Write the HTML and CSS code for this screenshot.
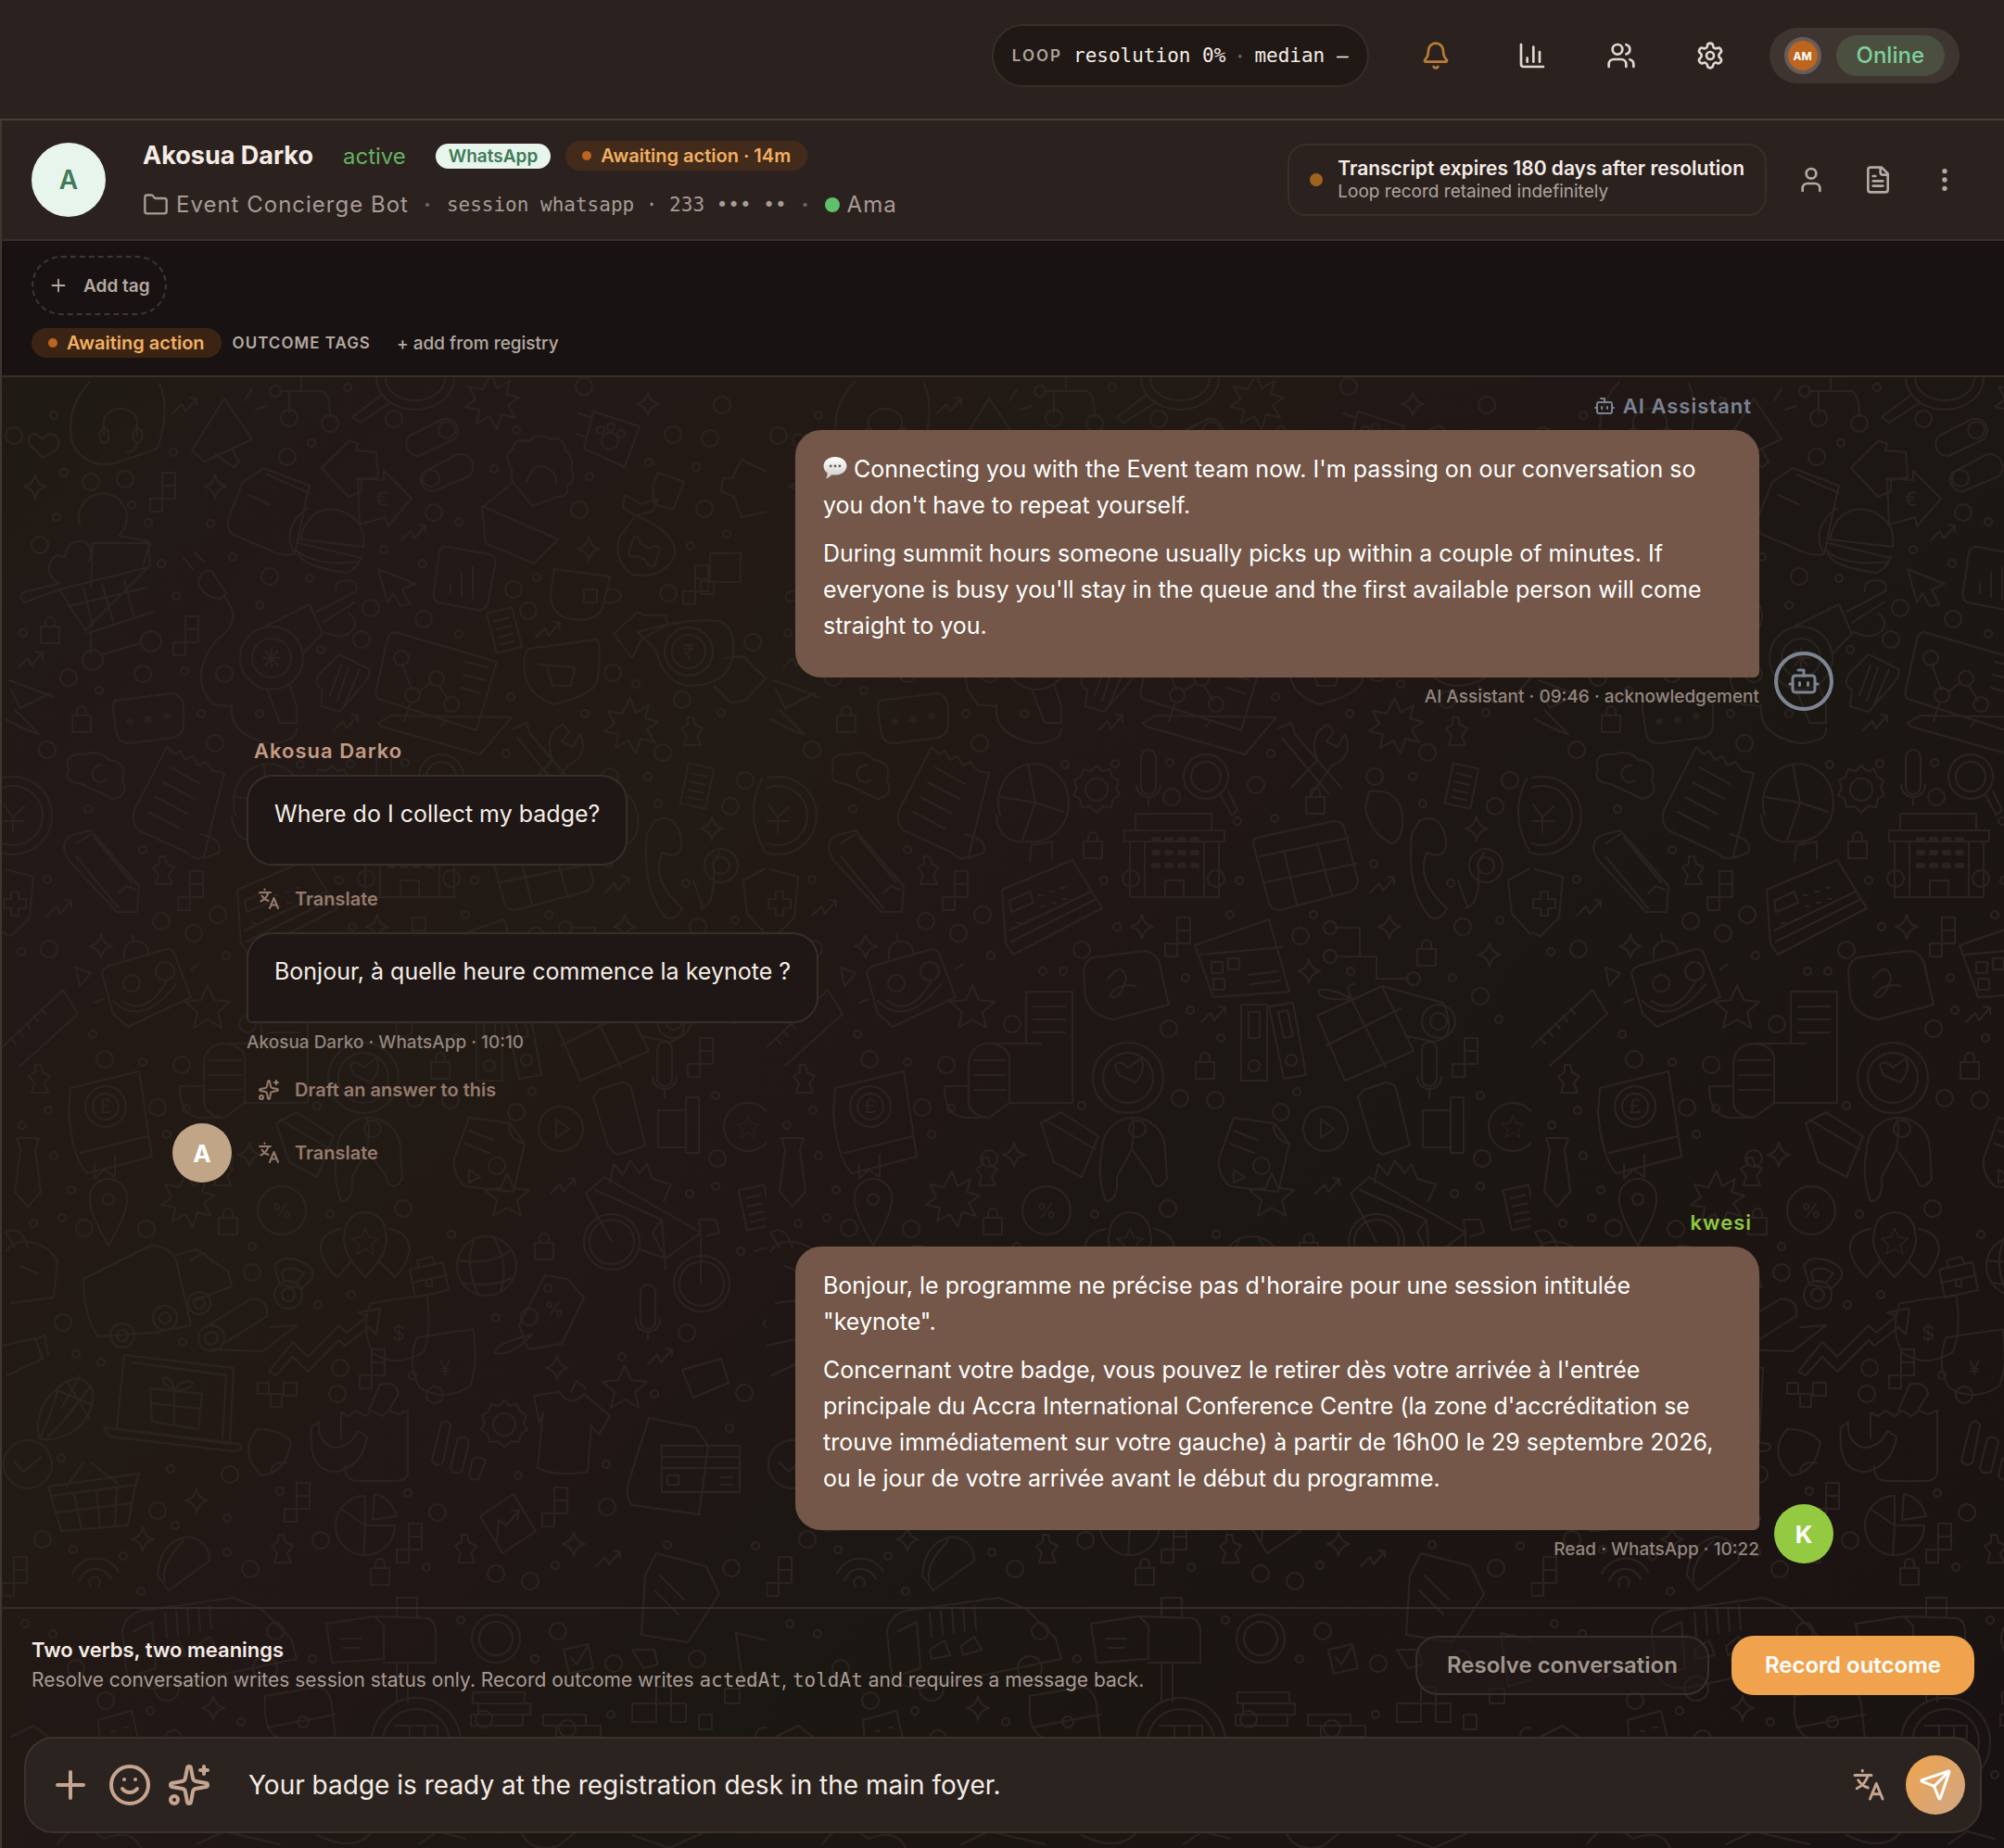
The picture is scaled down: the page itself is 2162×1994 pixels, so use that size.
FILE: index.html
```html
<!DOCTYPE html>
<html lang="en">
<head>
    <meta charset="UTF-8">
    <meta name="viewport" content="width=device-width, initial-scale=1.0">
    <title>Akosua Darko - Event Concierge Bot</title>
    <link rel="stylesheet" href="styles.css">
</head>
<body>
    <!-- Shared icons -->
    <svg class="sprite" aria-hidden="true">
        <symbol id="i-translate" viewBox="0 0 24 24"><path d="M2 5h12M7.500 1.500v.5M11.500 5c-1 4-4 7.500-8 9.500M4.500 8.500c1.500 2.500 4 4.500 7 5.500M13 22l4.500-11L22 22M14.500 18.500h6"/></symbol>
        <symbol id="i-spark" viewBox="0 0 24 24"><path d="M11.017 2.814a1 1 0 0 1 1.966 0l1.051 5.558a2 2 0 0 0 1.594 1.594l5.558 1.051a1 1 0 0 1 0 1.966l-5.558 1.051a2 2 0 0 0-1.594 1.594l-1.051 5.558a1 1 0 0 1-1.966 0l-1.051-5.558a2 2 0 0 0-1.594-1.594l-5.558-1.051a1 1 0 0 1 0-1.966l5.558-1.051a2 2 0 0 0 1.594-1.594zM20 2v4M22 4h-4"/><circle cx="4" cy="20" r="2"/></symbol>
        <symbol id="i-bot" viewBox="0 0 24 24"><path d="M12 8V4H8"/><rect width="16" height="12" x="4" y="8" rx="2"/><path d="M2 14h2M20 14h2M15 13v2M9 13v2"/></symbol>
        <symbol id="i-plus" viewBox="0 0 24 24"><path d="M5 12h14M12 5v14"/></symbol>
    </svg>

    <header class="topbar">
        <div class="loop">
            <span class="loop-label">LOOP</span>
            <span class="mono">resolution 0%</span>
            <span class="sep">·</span>
            <span class="mono">median —</span>
        </div>
        <button class="icon-btn bell" aria-label="Notifications">
            <svg class="icon" viewBox="0 0 24 24"><path d="M10.268 21a2 2 0 0 0 3.464 0M3.262 15.326A1 1 0 0 0 4 17h16a1 1 0 0 0 .74-1.673C19.410 13.956 18 12.499 18 8A6 6 0 0 0 6 8c0 4.499-1.411 5.956-2.738 7.326"/></svg>
        </button>
        <button class="icon-btn" aria-label="Reports">
            <svg class="icon" viewBox="0 0 24 24"><path d="M3 3v16a2 2 0 0 0 2 2h16M18 17V9M13 17V5M8 17v-3"/></svg>
        </button>
        <button class="icon-btn" aria-label="Team">
            <svg class="icon" viewBox="0 0 24 24"><path d="M16 21v-2a4 4 0 0 0-4-4H6a4 4 0 0 0-4 4v2M22 21v-2a4 4 0 0 0-3-3.870M16 3.130a4 4 0 0 1 0 7.750"/><circle cx="9" cy="7" r="4"/></svg>
        </button>
        <button class="icon-btn" aria-label="Settings">
            <svg class="icon" viewBox="0 0 24 24"><path d="M9.671 4.136a2.340 2.340 0 0 1 4.659 0 2.340 2.340 0 0 0 3.319 1.915 2.340 2.340 0 0 1 2.330 4.033 2.340 2.340 0 0 0 0 3.831 2.340 2.340 0 0 1-2.330 4.033 2.340 2.340 0 0 0-3.319 1.915 2.340 2.340 0 0 1-4.659 0 2.340 2.340 0 0 0-3.320-1.915 2.340 2.340 0 0 1-2.330-4.033 2.340 2.340 0 0 0 0-3.831A2.340 2.340 0 0 1 6.350 6.051a2.340 2.340 0 0 0 3.319-1.915"/><circle cx="12" cy="12" r="3"/></svg>
        </button>
        <button class="presence">
            <span class="me">AM</span>
            <span class="online">Online</span>
        </button>
    </header>

    <main class="conversation">
        <section class="conv-head">
            <div class="contact-avatar">A</div>
            <div class="contact">
                <div class="contact-row">
                    <h1>Akosua Darko</h1>
                    <span class="state">active</span>
                    <span class="channel">WhatsApp</span>
                    <span class="pill"><i class="dot"></i>Awaiting action · 14m</span>
                </div>
                <div class="contact-sub">
                    <svg class="icon folder" viewBox="0 0 24 24"><path d="M20 20a2 2 0 0 0 2-2V8a2 2 0 0 0-2-2h-7.900a2 2 0 0 1-1.690-.9L9.600 3.900A2 2 0 0 0 7.930 3H4a2 2 0 0 0-2 2v13a2 2 0 0 0 2 2Z"/></svg>
                    <span>Event Concierge Bot</span>
                    <span class="sep">·</span>
                    <span class="mono session">session whatsapp · 233 ••• ••</span>
                    <span class="sep">·</span>
                    <span class="agent"><i class="online-dot"></i>Ama</span>
                </div>
            </div>
            <div class="retention">
                <i class="dot"></i>
                <div>
                    <strong>Transcript expires 180 days after resolution</strong>
                    <p>Loop record retained indefinitely</p>
                </div>
            </div>
            <div class="conv-actions">
                <button class="icon-btn" aria-label="Contact">
                    <svg class="icon" viewBox="0 0 24 24"><circle cx="12" cy="7" r="4"/><path d="M19 21v-2a4 4 0 0 0-4-4H9a4 4 0 0 0-4 4v2"/></svg>
                </button>
                <button class="icon-btn" aria-label="Notes">
                    <svg class="icon" viewBox="0 0 24 24"><path d="M15 2H6a2 2 0 0 0-2 2v16a2 2 0 0 0 2 2h12a2 2 0 0 0 2-2V7ZM14 2v4a2 2 0 0 0 2 2h4M10 9H8M16 13H8M16 17H8"/></svg>
                </button>
                <button class="icon-btn" aria-label="More">
                    <svg class="icon solid" viewBox="0 0 24 24"><circle cx="12" cy="5" r="2"/><circle cx="12" cy="12" r="2"/><circle cx="12" cy="19" r="2"/></svg>
                </button>
            </div>
        </section>

        <section class="tags">
            <button class="add-tag"><svg class="icon" viewBox="0 0 24 24"><use href="#i-plus"/></svg>Add tag</button>
            <div class="tag-row">
                <span class="pill"><i class="dot"></i>Awaiting action</span>
                <span class="tag-label">OUTCOME TAGS</span>
                <button class="link-btn">+ add from registry</button>
            </div>
        </section>

        <div class="stage">
            <!-- Doodle wallpaper, one 825px wide tile repeated across the chat -->
            <svg class="wallpaper" aria-hidden="true">
                <defs>
                    <marker id="ring" markerUnits="userSpaceOnUse" markerWidth="24" markerHeight="24" refX="12" refY="12"><circle class="ring" cx="12" cy="12" r="9"/></marker>
                    <marker id="bead" markerUnits="userSpaceOnUse" markerWidth="12" markerHeight="12" refX="6" refY="6"><circle class="ring" cx="6" cy="6" r="4"/></marker>
                    <path id="d-spark" d="M0-13Q2-2 12 0Q2 2 0 13Q-2 2-12 0Q-2-2 0-13Z"/>
                    <path id="d-zig" d="M-14 8L-4-2L0 6L12-8M5-9L12-8L12-1"/>
                    <path id="d-lock" d="M-10-4H10V14H-10ZM-5-4V-9A5 5 0 0 1 5-9V-4"/>
                    <path id="d-steps" d="M-7-20H7V-6H-7ZM-7-6H7V8H-7ZM-7 8H-20V22H-7Z"/>
                    <path id="d-star" d="M0-24L7-8L24-6L11 5L15 22L0 13L-15 22L-11 5L-24-6L-7-8Z"/>
                    <path id="d-burst" d="M0-30L6-14L20-22L16-8L30-4L18 4L26 18L11 14L6 30L-2 16L-16 24L-13 9L-28 6L-17-2L-24-16L-9-13Z"/>
                    <path id="d-knight" d="M-8 14H10L6 4L12-4L4-8L2-16L-4-16L-4-8L-11-4L-5 4Z"/>
                    <path id="d-note" d="M-14-22H14V22H-14ZM-8-12H8M-8-3H8M-8 6H8M-8 14H8"/>
                    <path id="d-clip" d="M-8-18A8 8 0 0 1 8-18V14A8 8 0 0 1-8 14Z M-13 12A13 13 0 0 0 13 12M0 25V34"/>
                    <path id="d-bubble" d="M-34-34Q0-40 34-44Q40 0 30 24Q0 44-30 26Q-46 0-34-34Z"/>
                    <path id="d-pin" d="M0 42Q-22 4-20-10A20 20 0 0 1 20-10Q22 4 0 42ZM6-8A6 6 0 1 0-6-8A6 6 0 1 0 6-8"/>
                    <path id="d-gear" d="M0-26L6-20L14-22L17-14L24-10L21-2L25 6L18 10L16 19L7 18L0 25L-7 18L-16 19L-18 10L-25 6L-21-2L-24-10L-17-14L-14-22L-6-20ZM12 0A12 12 0 1 0-12 0A12 12 0 1 0 12 0"/>
                    <pattern id="doodles" width="825" height="1600" patternUnits="userSpaceOnUse">
                        <g transform="translate(0 -407)">
                            <polyline class="spots" marker-start="url(#ring)" marker-mid="url(#ring)" marker-end="url(#ring)" points="308,493 133,517 96,520 466,553 623,550 758,549 289,622 552,636 398,656 455,668 568,659 719,640 388,690 41,588 72,731 152,727 240,727 659,726 734,755 230,802 49,809 713,812 172,994 233,987 207,1007 51,1024 111,1143 194,1149 786,870 802,842 628,417 423,452 724,469 764,473 777,437 13,470 810,693 437,860 528,847 656,838 576,1010 751,1000 340,1025 265,1105 434,1110 770,1075 400,1218 446,1185 555,1200 484,1187 168,1195 240,1250 772,1250 433,1304 89,1325 156,1326 270,1373 66,1427 365,1476 569,1421 739,1438 362,1504 467,1505 801,1503 246,1591 168,1630 470,1632 653,1626 44,1661 344,1662 268,1693 533,1698 570,1706 787,1692 80,1800 112,1835 185,1876 600,1760 660,1795 520,1855 822,1873 295,1760 750,1790 610,1865 380,1905 140,1930 700,1930"/>
                            <polyline class="spots" marker-start="url(#bead)" marker-mid="url(#bead)" marker-end="url(#bead)" points="56,448 373,418 334,478 555,464 185,488 67,510 531,506 634,514 749,504 698,499 59,558 140,545 158,564 225,565 493,563 412,593 454,608 577,623 743,589 782,576 249,601 172,608 188,643 278,653 332,624 23,683 197,724 105,745 215,770 278,770 344,701 493,684 549,752 629,770 684,738 776,769 544,813 93,873 152,917 49,949 510,950 697,838 708,867 738,953 791,993 21,1027 242,1031 98,1116 152,1146 322,825 376,824 435,823 548,883 508,886 364,950 655,932 500,987 590,987 378,1000 452,1055 298,1048 630,1048 740,1055 320,1048 457,1090 490,1120 790,1100 572,1178 770,1182 340,1193 50,1198 22,1214 178,1224 56,1247 75,1284 199,1196 65,1314 34,1320 270,1345 354,1310 485,1332 589,1390 377,1397 742,1288 770,1280 797,1350 341,1408 533,1422 826,1428 669,1464 80,1461 107,1470 195,1448 443,1484 704,1504 64,1573 182,1585 785,1541 652,1580 557,1592 300,1609 438,1611 187,1646 243,1638 77,1672 243,1675 718,1667 813,1668 458,1691 131,1679 150,1717 597,1689 25,1752 55,1763 495,1748 335,1790 160,1846 258,1858 575,1790 845,1790 657,1850 98,1900 300,1930 500,1915"/>

                            <!-- small repeated shapes -->
                            <use href="#d-spark" x="36" y="525"/><use href="#d-spark" x="230" y="525"/><use href="#d-spark" x="697" y="436"/><use href="#d-spark" x="633" y="592"/><use href="#d-spark" x="766" y="894"/><use href="#d-spark" x="672" y="1000"/><use href="#d-spark" x="405" y="1000"/><use href="#d-spark" x="107" y="1021"/><use href="#d-spark" x="585" y="1048"/><use href="#d-spark" x="780" y="1030"/><use href="#d-spark" x="267" y="1246"/><use href="#d-spark" x="210" y="1619"/><use href="#d-spark" x="152" y="1661"/><use href="#d-spark" x="599" y="1476"/><use href="#d-spark" x="617" y="1666"/><use href="#d-spark" x="228" y="1843"/>
                            <use href="#d-zig" x="198" y="438"/><use href="#d-zig" x="445" y="575"/><use href="#d-zig" x="590" y="680"/><use href="#d-zig" x="32" y="712"/><use href="#d-zig" x="372" y="780"/><use href="#d-zig" x="665" y="955"/><use href="#d-zig" x="63" y="980"/><use href="#d-zig" x="483" y="1095"/><use href="#d-zig" x="606" y="1280"/><use href="#d-zig" x="711" y="1464"/><use href="#d-zig" x="655" y="1682"/>
                            <use href="#d-lock" x="52" y="680"/><use href="#d-lock" x="86" y="776"/><use href="#d-lock" x="352" y="912"/><use href="#d-lock" x="592" y="864"/><use href="#d-lock" x="712" y="1028"/><use href="#d-lock" x="473" y="1150"/><use href="#d-lock" x="244" y="1318"/><use href="#d-lock" x="585" y="1345"/><use href="#d-lock" x="408" y="1696"/>
                            <use href="#d-steps" x="180" y="530"/><use href="#d-steps" x="205" y="685"/><use href="#d-steps" x="755" y="630"/><use href="#d-steps" x="210" y="960"/><use href="#d-steps" x="450" y="1010"/><use href="#d-steps" x="760" y="1140"/><use href="#d-steps" x="406" y="1476"/><use href="#d-steps" x="325" y="1620"/><use href="#d-steps" x="603" y="1625"/><use href="#d-steps" x="446" y="1664"/><use href="#d-steps" x="20" y="1700"/>
                            <use href="#d-burst" x="528" y="433"/><use href="#d-burst" x="678" y="783"/><use href="#d-burst" x="200" y="1294"/>
                            <use href="#d-star" x="222" y="1087"/><use href="#d-star" x="545" y="1290"/><use href="#d-star" x="672" y="1497"/>
                            <use href="#d-knight" x="174" y="940"/><use href="#d-knight" x="744" y="790"/><use href="#d-knight" x="40" y="1165"/><use href="#d-knight" x="302" y="1672"/><use href="#d-knight" x="500" y="1672"/><use href="#d-knight" x="237" y="1265"/>
                            <use href="#d-gear" x="356" y="852"/><use href="#d-gear" x="542" y="1537"/>
                            <use href="#d-clip" x="412" y="835"/><use href="#d-clip" x="715" y="1150"/><use href="#d-clip" x="697" y="1412"/>
                            <use href="#d-pin" x="115" y="1302"/>
                            <use href="#d-note" transform="translate(542 680) rotate(-14)"/><use href="#d-note" transform="translate(750 848) rotate(12)"/><use href="#d-note" transform="translate(813 1303) rotate(-12)"/>

                            <!-- top rows -->
                            <path d="M95 412Q68 440 76 478Q90 506 122 500L168 484Q182 440 170 414M110 470V452A20 20 0 0 1 146 452V470M110 462a5 8 0 1 0 1 0M146 462a5 8 0 1 0 1 0M146 478Q144 488 134 488"/>
                            <path d="M44 494L30 480Q26 468 36 468L44 474Q52 464 60 472Q64 480 58 486Z"/>
                            <path d="M240 430L205 486L218 498L270 474ZM230 490L250 504L256 498L248 484M262 432L270 420M274 442L286 438"/>
                            <path d="M300 422H345Q354 424 354 450M310 422V446M323 422V406"/><circle cx="295" cy="422" r="6"/><circle cx="310" cy="451" r="9"/><circle cx="354" cy="457" r="9"/>
                            <path d="M404 408A42 34 0 0 0 488 408M414 408A32 24 0 0 0 478 408M410 426L378 450L386 456L420 434"/>
                            <path d="M440 470L476 452A13 13 0 0 1 488 474L450 492A13 13 0 0 1 440 470ZM454 510L492 490A14 14 0 0 1 504 514L466 530A13 13 0 0 1 454 510Z"/><circle cx="480" cy="464" r="9"/><circle cx="463" cy="516" r="9"/>
                            <path d="M345 505L374 476L384 478L382 486L404 488L406 515L388 518V530L374 536ZM384 516L412 518L412 508L442 538L416 568L414 558L386 566Z"/><text x="410" y="546">€</text>
                            <path d="M282 505L332 524L328 540L316 598Q300 600 290 594L248 576Q240 568 248 550L260 520ZM286 512L332 532M266 534L288 544M330 548Q300 570 316 598"/>
                            <path d="M322 582Q330 546 362 550Q394 560 390 590ZM320 586L388 602M318 594Q340 612 386 606M320 598Q326 612 372 618Q384 614 388 600"/>
                            <path d="M550 506Q540 490 552 484Q552 472 568 476Q580 466 592 474Q606 470 608 486Q618 494 614 506Q620 518 610 524Q612 536 600 536L572 546Q560 530 556 526Q548 520 550 506ZM566 520Q574 498 586 504Q600 510 598 522M518 548L552 520M518 546L600 582L574 608L522 586Z"/>
                            <path d="M638 444L688 460L672 504L628 484ZM622 446L634 450M620 468L630 472"/><circle cx="656" cy="476" r="9"/><circle cx="646" cy="464" r="4"/><circle cx="657" cy="461" r="4"/><circle cx="668" cy="468" r="4"/>
                            <path d="M708 510L736 520L724 550L704 544L702 524ZM798 496L832 512L826 552L798 558L790 536L776 530L778 516L788 516Z"/>
                            <path d="M684 556Q730 576 726 600Q712 626 680 620Q660 606 666 580ZM684 556L670 548L672 534L690 544L708 538L702 552ZM676 596L682 580Q688 578 688 586L698 592Q706 586 710 592L704 610Q698 614 694 604L686 600Q676 602 676 596"/>
                            <path d="M764 597H797V628H764ZM754 627H768V641H754Z"/>
                            <!-- cart, hair dryer, monitor -->
                            <path d="M84 566A26 26 0 1 1 126 578L158 584L160 610L90 680L62 636L24 650Q16 642 26 638L62 630Q44 618 54 604Q60 596 68 602Q70 582 88 584Q100 590 94 606M96 632L98 586L160 586L152 610M62 636L158 612M72 654L156 634M88 634L98 676M108 630L120 670M132 626L142 664M90 684L164 660M96 684V706M108 706L150 694"/><circle cx="98" cy="712" r="11"/><circle cx="161" cy="692" r="11"/>
                            <path d="M212 630Q214 614 226 616L242 640L236 646Q220 646 212 630M240 644Q262 670 232 690Q200 730 228 760L246 762M248 760Q244 794 290 802Q320 800 318 786M196 602L206 614M208 596L218 606"/>
                            <circle cx="291" cy="710" r="34"/><circle cx="291" cy="710" r="21"/><path d="M282 710H300M291 700V720M284 702L298 718M298 702L284 718M284 676L332 652L346 684L324 706M286 744L300 780L318 780V762L310 738M340 660L382 638Q386 626 370 626Q358 628 360 638M346 672L380 650M348 682Q370 692 380 678Q384 668 374 662"/>
                            <path d="M346 744Q336 740 342 728L364 706L396 722Q398 728 392 736L364 768L344 762ZM354 750L366 718M362 756L374 720M370 760L386 722"/>
                            <path d="M424 682L534 714L512 788L406 754Q402 750 404 744L416 690Q418 682 424 682ZM406 780L420 772L550 774L516 814L410 784ZM440 760L434 778M480 776L474 784M500 714L524 720M498 728L522 734M496 742L516 748"/><path d="M432 716L442 744M450 746L464 736M472 740L482 756"/><circle cx="431" cy="710" r="8"/><circle cx="443" cy="750" r="8"/><circle cx="469" cy="732" r="8"/><circle cx="485" cy="760" r="8"/>
                            <path d="M406 614L446 630L432 636L440 652L430 654L422 640L416 650ZM480 590L526 598Q534 600 532 610L524 652Q520 660 512 658L470 650Q464 646 466 638L472 596Q474 590 480 590ZM484 640V630M496 644V618M508 646V612"/>
                            <path d="M596 614L656 622L648 656Q640 672 616 668Q592 666 592 640ZM628 636H642V650H628ZM654 636Q668 634 668 644Q664 652 652 650"/>
                            <path d="M568 700L642 690Q648 700 642 736Q636 750 596 760Q566 750 564 724Q562 708 568 700ZM578 716L588 718L594 740H614L618 720L590 718"/>
                            <path d="M660 684L686 660L692 664H716L718 674L690 690L680 710ZM686 682Q740 666 774 670Q794 678 788 712Q780 738 746 740Q714 740 706 702ZM780 710L800 708L824 732L802 756L786 758L768 740"/><circle cx="741" cy="703" r="26"/><circle cx="741" cy="703" r="18"/><text x="741" y="711">₹</text>
                            <path d="M8 734L56 752M14 766L40 792Q30 790 4 776M10 744L20 764L52 748M122 756L184 748Q194 750 196 762V780Q196 794 184 796L138 802Q126 802 124 792L120 766Q120 758 122 756Z"/><text x="138" y="790">*</text><text x="158" y="788">*</text><text x="178" y="784">*</text>
                            <path d="M552 786L566 780L570 792L620 850M556 796L606 856M566 850L594 820Q584 790 606 782L612 790L604 800L616 806L624 792Q634 816 610 826L586 860"/>
                            <!-- middle rows -->
                            <path d="M72 830Q66 812 90 814Q104 808 116 820Q136 822 130 842Q138 858 120 862L86 846Q66 844 72 830"/><path d="M108 826A9 9 0 1 0 112 842"/>
                            <path d="M178 806L186 814L192 810L198 820L206 816L212 826L220 822L228 832L240 834L218 924Q210 930 200 920L148 896Q138 886 144 872L178 806M182 828L214 846M174 844L208 862M166 860L200 878M158 876L192 894M214 900Q240 906 234 920L218 926"/>
                            <circle cx="12" cy="880" r="42"/><circle cx="12" cy="880" r="32"/><path d="M2 868L12 882L24 870M12 882V898M0 886H24M820 840Q800 880 824 920"/>
                            <path d="M68 920Q64 904 80 900L96 896L148 956L146 984L124 984L72 928ZM80 924L126 980M100 904L140 952M126 964L134 956L144 960M96 900L80 910"/>
                            <path d="M252 880A38 42 0 1 1 284 908Q250 912 248 880M282 824L290 866L252 860M290 866L320 876M290 866L276 906"/>
                            <circle cx="474" cy="838" r="24"/><circle cx="474" cy="838" r="16"/><path d="M490 858L502 880L508 874L498 854"/>
                            <path d="M254 960L330 928L362 980L266 1030L258 1018L254 960ZM262 1004L350 962M264 1016L356 970M284 930L286 912L308 908L308 926M262 972L284 962L288 974L264 984Z"/><path d="M294 966h4m8-4h4m8-4h4M296 978h4m8-4h4m8-4h4M270 996h4m10-4h4"/>
                            <path d="M398 878H480V896H398ZM386 896H494V908H386ZM392 908V968H488V908M408 908V968M472 908V968M430 968V950H450V968"/><path class="dots" d="M418 906h4m10 0h4m10 0h4m10 0h4M418 920h4m10 0h4m10 0h4m10 0h4M418 934h4m10 0h4m10 0h4m10 0h4"/><circle cx="393" cy="948" r="9"/><circle cx="485" cy="948" r="9"/>
                            <path d="M528 904L612 886Q622 886 624 896L638 950Q638 958 630 962L554 982Q544 982 542 974L526 914Q524 906 528 904ZM532 924L628 904M538 952L636 932M558 918L572 976M594 910L610 966"/>
                            <path d="M650 854Q682 850 686 880Q688 906 674 910Q652 900 646 872ZM704 886Q724 876 732 900Q738 930 712 920Q700 950 734 980Q728 994 716 990Q690 960 696 900ZM754 980Q768 976 768 950V930L774 920M746 950L756 978"/><circle cx="776" cy="934" r="18"/><circle cx="776" cy="934" r="9"/>
                            <path d="M4 938L34 946L30 990L10 1010L0 1006M10 962H18V970H26V980H18V988H10V980H2V970H10ZM822 938L800 950L804 986L824 1008"/>
                            <path d="M116 1042L178 1024Q186 1024 188 1034L204 1076L136 1108L120 1094L108 1050Q110 1044 116 1042ZM132 1034Q130 1014 148 1016Q158 1018 158 1028M142 1016L140 1008M120 1080Q150 1110 188 1062M130 1080Q156 1098 178 1058M204 1046L212 1040M110 1078L100 1082"/><circle cx="140" cy="1061" r="9"/><circle cx="176" cy="1048" r="10"/>
                            <path d="M0 1130L66 1068L82 1094L20 1150M10 1120l5 6m3-14l5 6m3-14l5 6m3-14l5 6m3-14l5 6M80 1044L96 1050L84 1064Z"/>
                            <path d="M342 1048Q344 1032 360 1032L408 1026Q424 1028 426 1050L434 1084L374 1100Q350 1096 344 1076ZM368 1056Q384 1036 388 1056Q380 1082 370 1074Q380 1060 398 1064"/>
                            <path d="M462 1020L542 992L564 1070L482 1076ZM468 1030L556 1022M480 1038h12v12h-12ZM498 1034h12v12h-12ZM482 1056h12v12h-12ZM520 1052L552 1048M522 1062L554 1058"/>
                            <path d="M614 1001H640V1032M614 1032H658V1056H692"/><circle cx="608" cy="1001" r="7"/><circle cx="608" cy="1032" r="7"/><circle cx="698" cy="1056" r="7"/>
                            <path d="M280 1070H330V1190H262M280 1070V1124M236 1126H296M236 1126Q218 1130 218 1150V1190Q220 1204 240 1206L262 1190V1140Q258 1126 236 1126M192 1172H218M192 1172Q192 1204 214 1206H240M288 1086H322M288 1100H322M288 1114H322M224 1144H258M224 1160H258M224 1176H258"/>
                            <circle cx="390" cy="1163" r="38"/><circle cx="390" cy="1163" r="27"/><path d="M376 1150Q380 1142 390 1152L404 1142Q410 1154 398 1168L380 1160Z"/>
                            <path d="M512 1084H540V1166H512ZM542 1086L568 1082L582 1160L558 1164ZM520 1092H532V1120H520ZM552 1092L562 1090L568 1118L558 1120Z"/><circle cx="526" cy="1150" r="6"/><circle cx="566" cy="1144" r="6"/>
                            <path d="M594 1096L664 1064L698 1134L624 1166ZM604 1128L684 1088M632 1080L668 1152M632 1078Q592 1080 596 1068Q610 1066 632 1078Q622 1062 634 1062M664 1064L730 1082Q746 1120 720 1124L690 1118"/><circle cx="725" cy="1102" r="18"/><circle cx="725" cy="1102" r="9"/>
                            <path d="M74 1174L148 1156L162 1248L92 1266Q76 1250 72 1200ZM84 1244L158 1226M100 1256V1272L110 1262L122 1270V1246"/><circle cx="112" cy="1194" r="22"/><circle cx="112" cy="1194" r="14"/><text x="112" y="1201">£</text>
                            <path d="M296 1212L318 1200L358 1226L340 1270L310 1254ZM300 1208L354 1240M362 1240A34 34 0 0 1 430 1240L432 1272Q420 1290 414 1268L394 1240L378 1270Q380 1296 366 1296Q356 1270 362 1240M394 1240Q398 1214 394 1208"/>
                            <path d="M504 1206L548 1212L564 1234L552 1286L500 1280Q486 1268 488 1250ZM548 1212Q544 1226 562 1234M504 1220L530 1230M500 1234L526 1244M504 1262L516 1270L504 1276Z"/><circle cx="534" cy="1258" r="9"/>
                            <circle cx="603" cy="1218" r="24"/><path d="M598 1208L612 1218L598 1228Z"/><path d="M644 1176L668 1168Q678 1168 680 1178L694 1236L664 1246Q654 1240 652 1230L638 1184ZM708 1198H738V1238H708ZM738 1184H752V1244H738Z"/><circle cx="805" cy="1216" r="26"/><use href="#d-star" transform="translate(805 1216) scale(.5)"/>
                            <path d="M16 1228H40L36 1240L42 1286L28 1302L14 1286L20 1240Z"/>
                            <!-- lower rows -->
                            <circle cx="302" cy="1306" r="26"/><text x="302" y="1314">%</text>
                            <path d="M392 1378Q364 1350 370 1330A22 22 0 0 1 414 1330Q420 1350 392 1378M366 1326Q342 1330 344 1350Q350 1370 362 1378L376 1362M418 1326Q440 1330 440 1350Q434 1370 424 1378L408 1362"/><use href="#d-star" transform="translate(392 1340) scale(.6)"/>
                            <circle cx="523" cy="1366" r="32"/><path d="M492 1360Q530 1366 550 1348M496 1384Q530 1390 552 1378M510 1336Q498 1366 514 1396M530 1334Q548 1364 538 1394"/>
                            <path d="M440 1370L476 1362L482 1392L446 1400ZM450 1368L448 1360L464 1356L468 1364M442 1384L480 1376M458 1380h6v8h-6Z"/>
                            <circle cx="658" cy="1340" r="30"/><circle cx="658" cy="1340" r="24"/><circle cx="755" cy="1385" r="30"/><circle cx="755" cy="1385" r="24"/><path d="M658 1340L630 1288L650 1270L754 1330V1385M640 1284L712 1316L702 1330L716 1358L754 1330M716 1358L688 1348M712 1316L716 1370M656 1276L660 1256L670 1268L678 1252L688 1266L696 1256L702 1272L722 1278L714 1296M754 1330L752 1316L770 1316L774 1330L760 1334"/>
                            <path d="M4 1350Q20 1330 50 1348L60 1360L56 1400L10 1406M14 1346L4 1330Q20 1320 28 1346M20 1366L38 1374M812 1350L826 1346"/>
                            <path d="M88 1380L160 1344Q180 1344 188 1360L204 1430L164 1438L104 1442Q88 1420 88 1380ZM188 1354L210 1348L244 1372L248 1388L206 1404M204 1360L218 1352L228 1362"/><circle cx="130" cy="1441" r="13"/><circle cx="130" cy="1441" r="6"/><circle cx="176" cy="1422" r="13"/><circle cx="176" cy="1422" r="6"/><circle cx="213" cy="1406" r="12"/><circle cx="213" cy="1406" r="6"/>
                            <path d="M294 1366Q300 1354 320 1360Q340 1368 334 1380L324 1390L300 1386ZM302 1372Q312 1364 326 1374L318 1384L304 1382Z"/><circle cx="309" cy="1397" r="15"/><circle cx="309" cy="1397" r="7"/>
                            <path d="M216 1434L268 1402Q288 1400 286 1420L242 1448M290 1432L318 1430L282 1458L226 1456"/><circle cx="226" cy="1444" r="14"/><circle cx="226" cy="1444" r="7"/>
                            <path d="M288 1480L314 1448L330 1464L364 1430L372 1438L394 1420L384 1416L408 1412L404 1440L396 1432L370 1452L364 1446L330 1480L314 1464L296 1484Z"/>
                            <use href="#d-bubble" transform="translate(428 1437) scale(.9)"/><text x="428" y="1446">$</text><use href="#d-bubble" transform="translate(478 1474) scale(.9)"/><text x="478" y="1484">¥</text>
                            <path d="M586 1376L610 1380L628 1400L604 1450L568 1456L558 1430ZM572 1440Q530 1450 532 1460Q550 1464 572 1440"/><text x="596" y="1420">%</text>
                            <path d="M0 1452L36 1444L44 1466L6 1484M36 1446L46 1440L50 1462M734 1478L776 1466L784 1492L746 1508Z"/>
                            <path d="M132 1462L250 1476L246 1558L124 1542ZM140 1470L242 1484L238 1552M110 1540L256 1558Q262 1564 250 1566L116 1550ZM160 1498L216 1504L212 1542L162 1534ZM186 1500V1538M160 1514L214 1520M186 1500Q168 1490 176 1486Q184 1488 186 1500Q196 1486 206 1492Q204 1500 186 1500"/>
                            <path d="M40 1552Q34 1520 60 1498Q84 1476 98 1500Q100 1530 74 1546Q56 1556 40 1552ZM42 1550Q56 1520 60 1500M50 1550Q70 1530 78 1520M60 1500L98 1516M70 1490L94 1530M84 1484L64 1520M96 1496L68 1530"/>
                            <path d="M276 1492H288V1504H276ZM290 1504H302V1518H290ZM304 1492H318V1506H304Z"/>
                            <path d="M366 1552V1524L374 1528L382 1522L392 1528L400 1522L410 1528L418 1522L428 1526L438 1522V1590Q436 1598 424 1598H384Q370 1598 370 1582M396 1522L408 1494Q426 1490 428 1504L418 1520M334 1540Q330 1590 362 1588Q390 1580 394 1550L384 1544Q376 1562 358 1562Q340 1556 342 1534Z"/>
                            <path d="M474 1536Q480 1530 484 1538L476 1578Q468 1584 464 1576ZM492 1552Q500 1548 504 1556L496 1588Q486 1592 484 1584ZM508 1574Q516 1570 522 1576L514 1596Q506 1598 504 1592Z"/>
                            <path d="M574 1506L602 1502Q614 1520 628 1504L656 1528L644 1548L636 1538L632 1588Q600 1594 578 1584L584 1524L580 1536ZM614 1502L620 1490L630 1498"/>
                            <path d="M698 1530L748 1540L762 1560L752 1634L680 1624Q672 1616 676 1600ZM712 1560H796V1610H712ZM712 1572H796M712 1584H796M718 1592H730V1602H718ZM776 1594H788M776 1602H788"/>
                            <circle cx="28" cy="1580" r="26"/><path d="M14 1578L24 1588L42 1572"/>
                            <path d="M50 1604L148 1590L144 1602L136 1646L64 1652ZM54 1614L146 1602M60 1632L140 1622M78 1612L86 1650M102 1608L106 1648M124 1604L122 1646M70 1604L88 1578M124 1600L96 1578"/>
                            <path d="M392 1614A32 32 0 1 0 424 1646L392 1646ZM402 1612L400 1640L426 1636Q420 1616 402 1612ZM366 1628L392 1646L390 1678M516 1636L552 1612L576 1652L540 1676ZM534 1662L536 1640L544 1646L558 1630M550 1630L558 1630L556 1640"/>
                            <path d="M168 1700Q170 1664 200 1658Q224 1662 224 1684L180 1716ZM176 1706Q170 1690 196 1662M96 1712a6 6 0 1 1 8 0M84 1706a18 18 0 0 1 34-2M76 1698a28 28 0 0 1 50-2M270 1580Q260 1560 276 1542Q300 1542 312 1556Q306 1590 280 1592ZM290 1590Q290 1576 308 1578"/>
                            <path d="M694 1700L706 1676L760 1690L774 1720L740 1772L690 1764ZM710 1700L736 1726M704 1716L730 1742"/>
                            <path d="M130 1760Q132 1744 150 1738L250 1724L280 1736L312 1768L318 1790L164 1822Q136 1820 134 1800ZM142 1760L162 1750L166 1800L148 1806M176 1740L178 1766M188 1738L190 1764M200 1736L202 1762M212 1734L214 1760M224 1732L226 1758M176 1780L192 1770L198 1786L178 1790ZM210 1776L224 1766L232 1780L212 1786Z"/><circle cx="178" cy="1822" r="13"/><circle cx="284" cy="1800" r="13"/>
                            <path d="M350 1752L402 1744L412 1754V1790L356 1794ZM402 1744L460 1746Q468 1750 468 1760V1794H412M426 1744V1724H448V1744M366 1768H388M368 1778H386M426 1794V1836M438 1794V1836"/>
                            <circle cx="533" cy="1768" r="26"/><circle cx="533" cy="1768" r="18"/>
                            <path d="M792 1762L852 1776L830 1790L846 1806L800 1820ZM606 1780L632 1774L638 1800L612 1806ZM614 1788L620 1796L632 1776M680 1780L704 1780L708 1796L692 1800Z"/>
                            <path d="M284 1830L342 1820Q354 1824 356 1840L360 1876H300Q286 1870 284 1850ZM286 1864L360 1850"/><circle cx="325" cy="1858" r="6"/>
                            <circle cx="447" cy="1880" r="48"/><circle cx="447" cy="1880" r="36"/><path d="M424 1862H470V1876H424M440 1862V1876M456 1862V1876"/>
                            <path d="M508 1826H564V1838H508ZM514 1838H570V1850H514ZM506 1850H562V1862H506ZM584 1850H630V1862H584ZM598 1862H646V1874H598ZM680 1838H706V1858H680ZM706 1820H722V1838H706ZM722 1838H738V1858H722ZM752 1850H766V1866H752ZM780 1822H796V1838H780Z"/>
                            <path d="M10 1874L34 1862L58 1880L40 1900M104 1856L140 1846L148 1880H106ZM118 1868h4M132 1864h4M60 1990Q80 1960 110 1984Q140 1972 150 1994M210 1990L240 1976L300 1990M340 1980Q380 2000 400 1976M450 1990L470 1976L500 1984M560 1976Q570 2000 600 1992L620 1976M680 1980L720 1994L760 1976"/>
                        </g>
                    </pattern>
                </defs>
                <rect width="100%" height="100%" fill="url(#doodles)" stroke="none"/>
            </svg>

            <section class="chat">
                <article class="msg out">
                    <div class="msg-body">
                        <div class="author bot-name"><svg class="icon" viewBox="0 0 24 24"><use href="#i-bot"/></svg>AI Assistant</div>
                        <div class="bubble tail">
                            <p><svg class="balloon" viewBox="0 0 24 24" role="img" aria-label="speech balloon"><defs><linearGradient id="balloon-fill" x1="0" y1="0" x2="0" y2="1"><stop offset="0" stop-color="#fff"/><stop offset="1" stop-color="#cfcbc9"/></linearGradient></defs><path fill="url(#balloon-fill)" d="M12 1C18.500 1 23.500 5 23.500 10S18.500 19 12 19Q10 19 8.500 18.600Q6 22 2.500 22.500Q4.500 20 4.300 17Q.5 14.500 .5 10C.5 5 5.500 1 12 1Z"/><g fill="#5c5652"><circle cx="7.500" cy="10" r="1.300"/><circle cx="12" cy="10" r="1.300"/><circle cx="16.500" cy="10" r="1.300"/></g></svg> Connecting you with the Event team now. I'm passing on our conversation so you don't have to repeat yourself.</p>
                            <p>During summit hours someone usually picks up within a couple of minutes. If everyone is busy you'll stay in the queue and the first available person will come straight to you.</p>
                        </div>
                        <div class="meta">AI Assistant · 09:46 · acknowledgement</div>
                    </div>
                    <div class="avatar bot"><svg class="icon" viewBox="0 0 24 24"><use href="#i-bot"/></svg></div>
                </article>

                <article class="msg in">
                    <div class="avatar guest">A</div>
                    <div class="msg-body">
                        <div class="author guest-name">Akosua Darko</div>
                        <div class="bubble"><p>Where do I collect my badge?</p></div>
                        <button class="msg-action"><svg class="icon" viewBox="0 0 24 24"><use href="#i-translate"/></svg>Translate</button>
                        <div class="bubble tail"><p>Bonjour, à quelle heure commence la keynote ?</p></div>
                        <div class="meta">Akosua Darko · WhatsApp · 10:10</div>
                        <button class="msg-action"><svg class="icon" viewBox="0 0 24 24"><use href="#i-spark"/></svg>Draft an answer to this</button>
                        <button class="msg-action"><svg class="icon" viewBox="0 0 24 24"><use href="#i-translate"/></svg>Translate</button>
                    </div>
                </article>

                <article class="msg out">
                    <div class="msg-body">
                        <div class="author agent-name">kwesi</div>
                        <div class="bubble tail">
                            <p>Bonjour, le programme ne précise pas d'horaire pour une session intitulée "keynote".</p>
                            <p>Concernant votre badge, vous pouvez le retirer dès votre arrivée à l'entrée principale du Accra International Conference Centre (la zone d'accréditation se trouve immédiatement sur votre gauche) à partir de 16h00 le 29 septembre 2026, ou le jour de votre arrivée avant le début du programme.</p>
                        </div>
                        <div class="meta">Read · WhatsApp · 10:22</div>
                    </div>
                    <div class="avatar kwesi">K</div>
                </article>
            </section>

            <section class="verbs">
                <div class="verbs-text">
                    <strong>Two verbs, two meanings</strong>
                    <p>Resolve conversation writes session status only. Record outcome writes <code>actedAt</code>, <code>toldAt</code> and requires a message back.</p>
                </div>
                <button class="btn">Resolve conversation</button>
                <button class="btn primary">Record outcome</button>
            </section>

            <form class="composer">
                <button type="button" class="tool" aria-label="Attach"><svg class="icon" viewBox="0 0 24 24"><use href="#i-plus"/></svg></button>
                <button type="button" class="tool" aria-label="Emoji"><svg class="icon" viewBox="0 0 24 24"><circle cx="12" cy="12" r="10"/><path d="M8 14s1.500 2 4 2 4-2 4-2M9 9h.01M15 9h.01"/></svg></button>
                <button type="button" class="tool" aria-label="Draft with AI"><svg class="icon" viewBox="0 0 24 24"><use href="#i-spark"/></svg></button>
                <input type="text" aria-label="Message" value="Your badge is ready at the registration desk in the main foyer.">
                <button type="button" class="tool small" aria-label="Translate"><svg class="icon" viewBox="0 0 24 24"><use href="#i-translate"/></svg></button>
                <button type="button" class="send" aria-label="Send"><svg class="icon" viewBox="0 0 24 24"><path d="M14.536 21.686a.5.5 0 0 0 .937-.024l6.500-19a.496.496 0 0 0-.635-.635l-19 6.500a.5.5 0 0 0-.024.937l7.930 3.180a2 2 0 0 1 1.112 1.110zM21.854 2.147l-10.940 10.939"/></svg></button>
            </form>
        </div>
    </main>
</body>
</html>
```

FILE: styles.css
```css
* {
    box-sizing: border-box;
}
body {
    font-family: Inter, "Liberation Sans", sans-serif;
    margin: 0;
    min-height: 100vh;
    display: flex;
    flex-direction: column;
    background-color: #2b221f;
    color: #f5ece6;
}
h1, p {
    margin: 0;
}
button, input {
    font-family: inherit;
    background: none;
    border: 0;
    padding: 0;
    color: inherit;
}
button {
    cursor: pointer;
}
.sprite {
    position: absolute;
    width: 0;
    height: 0;
}
.icon {
    width: 32px;
    height: 32px;
    flex: none;
    fill: none;
    stroke: currentColor;
    stroke-width: 2;
    stroke-linecap: round;
    stroke-linejoin: round;
}
.icon.solid {
    fill: currentColor;
    stroke: none;
}
.mono, code {
    font-family: "DejaVu Sans Mono", monospace;
}
.sep {
    font-weight: 700;
    color: #6f645e;
}

/* Top bar */
.topbar {
    display: flex;
    justify-content: flex-end;
    align-items: center;
    gap: 32px;
    height: 130px;
    padding: 0 48px 8px 32px;
    border-bottom: 2px solid #493e35;
    color: #e0d7d1;
}
.loop {
    display: flex;
    align-items: center;
    gap: 12px;
    height: 68px;
    padding: 0 20px;
    border: 2px solid #362e29;
    border-radius: 34px;
    background-color: #1f1815;
    font-size: 21px;
    color: #f5ece6;
}
.loop-label {
    font-size: 17px;
    font-weight: 600;
    letter-spacing: 2px;
    color: #b0a49d;
}
.icon-btn {
    display: flex;
    align-items: center;
    justify-content: center;
    width: 64px;
    height: 64px;
}
.bell {
    margin: 0 8px;
    color: #b97c35;
}
.presence {
    display: flex;
    align-items: center;
    gap: 16px;
    height: 60px;
    padding: 0 16px;
    border-radius: 30px;
    background-color: #3e3531;
}
.me {
    display: flex;
    align-items: center;
    justify-content: center;
    width: 40px;
    height: 40px;
    border: 4px solid #665d5a;
    border-radius: 50%;
    background-color: #bd641e;
    font-size: 12px;
    font-weight: 700;
    color: #fff;
}
.online {
    padding: 0 22px;
    line-height: 44px;
    border-radius: 22px;
    background-color: #4a4f40;
    font-size: 24px;
    font-weight: 500;
    color: #80cf9b;
}

/* Conversation header */
.conversation {
    flex: 1;
    display: flex;
    flex-direction: column;
    border-left: 2px solid #403630;
}
.conv-head {
    display: flex;
    align-items: center;
    height: 130px;
    padding: 0 32px;
    border-bottom: 2px solid #382f2a;
}
.contact-avatar {
    width: 80px;
    height: 80px;
    border-radius: 50%;
    background-color: #e8f5ec;
    color: #3f7b59;
    font-size: 28px;
    font-weight: 600;
    line-height: 80px;
    text-align: center;
}
.contact {
    flex: 1;
    margin-left: 40px;
}
.contact-row {
    display: flex;
    align-items: center;
    margin-bottom: 20px;
}
.contact-row h1 {
    font-size: 27px;
    font-weight: 700;
    line-height: 34px;
}
.state {
    margin: 0 32px;
    font-size: 24px;
    color: #65b162;
}
.channel {
    padding: 0 14px;
    margin-right: 16px;
    border-radius: 14px;
    background-color: #e8f5ec;
    color: #3f7b59;
    font-size: 19px;
    font-weight: 600;
    line-height: 27px;
}
.pill {
    display: flex;
    align-items: center;
    gap: 10px;
    padding: 0 18px;
    border-radius: 16px;
    background-color: #432b1b;
    color: #f2b062;
    font-size: 20px;
    font-weight: 600;
    line-height: 32px;
}
.dot {
    width: 10px;
    height: 10px;
    flex: none;
    border-radius: 50%;
    background-color: #bd651f;
}
.contact-sub {
    display: flex;
    align-items: center;
    font-size: 24px;
    line-height: 32px;
    letter-spacing: 1px;
    color: #a89c96;
}
.contact-sub .sep {
    margin: 0 16px;
}
.folder {
    width: 28px;
    height: 28px;
    margin-right: 8px;
}
.session {
    font-size: 21px;
    letter-spacing: 0;
}
.agent {
    display: flex;
    align-items: center;
    gap: 8px;
}
.online-dot {
    width: 16px;
    height: 16px;
    border-radius: 50%;
    background-color: #60c06c;
}
.retention {
    display: flex;
    align-items: center;
    gap: 16px;
    height: 78px;
    padding: 0 22px;
    border: 2px solid #382f2a;
    border-radius: 20px;
    font-size: 19px;
    line-height: 24px;
    color: #b0a49d;
}
.retention strong {
    font-size: 21px;
    font-weight: 600;
    color: #f5ece6;
}
.retention .dot {
    width: 14px;
    height: 14px;
    background-color: #a0621f;
}
.conv-actions {
    display: flex;
    gap: 8px;
    margin-left: 16px;
    color: #b5a9a2;
}

/* Tags */
.tags {
    padding: 16px 32px 19px;
    border-bottom: 2px solid #382f2a;
    background-color: #181312;
    color: #b5a9a2;
}
.add-tag {
    display: flex;
    align-items: center;
    gap: 16px;
    height: 64px;
    padding: 0 16px;
    border: 2px dashed #3f3632;
    border-radius: 32px;
    font-size: 19px;
    font-weight: 600;
}
.add-tag .icon {
    width: 22px;
    height: 22px;
}
.tag-row {
    display: flex;
    align-items: center;
    gap: 12px;
    margin-top: 14px;
}
.tag-row .pill {
    background-color: #3c2415;
}
.tag-label {
    font-size: 17px;
    font-weight: 600;
    letter-spacing: 1px;
}
.link-btn {
    margin-left: 16px;
    font-size: 19px;
    font-weight: 500;
}

/* Chat */
.stage {
    flex: 1;
    display: flex;
    flex-direction: column;
    position: relative;
    background: linear-gradient(135deg, #1f1a14, #231917 15%, #221a14 32%, #211716 45%, #1b1712 60%, #1c1412 82%, #171312);
}
.wallpaper {
    position: absolute;
    inset: 0;
    width: 100%;
    height: 100%;
    fill: none;
    stroke: #2b2320;
    stroke-width: 2;
    stroke-linejoin: round;
    stroke-linecap: round;
}
.wallpaper .ring {
    fill: none;
    stroke: #2b2320;
    stroke-width: 2;
}
.wallpaper .spots {
    stroke: none;
}
.wallpaper .dots {
    stroke-width: 6;
}
.wallpaper text {
    fill: #2b2320;
    stroke: none;
    font-size: 22px;
    text-anchor: middle;
}
.chat, .verbs, .composer {
    position: relative;
}
.chat {
    flex: 1;
    display: flex;
    flex-direction: column;
    gap: 28px;
    padding: 16px 184px 45px;
}
.msg {
    display: flex;
    align-items: flex-end;
    gap: 16px;
}
.msg.out {
    justify-content: flex-end;
}
.msg-body {
    display: flex;
    flex-direction: column;
    align-items: flex-start;
    max-width: 1040px;
}
.out .msg-body {
    align-items: flex-end;
}
.author {
    display: flex;
    align-items: center;
    gap: 8px;
    margin: 0 8px 11px;
    font-size: 22px;
    font-weight: 600;
    line-height: 30px;
    letter-spacing: 1px;
}
.author .icon {
    width: 24px;
    height: 24px;
}
.bot-name {
    color: #7b8393;
}
.guest-name {
    color: #c39b85;
}
.agent-name {
    color: #8fc93f;
}
.bubble {
    padding: 21px 28px 34px;
    border: 2px solid #362e29;
    border-radius: 28px;
    background-color: #1e1715;
    font-size: 25px;
    line-height: 39px;
}
.out .bubble {
    border-color: #745748;
    background-color: #745748;
    color: #fff;
}
.bubble p + p {
    margin-top: 13px;
}
.in .tail {
    border-bottom-left-radius: 6px;
}
.out .tail {
    border-bottom-right-radius: 6px;
}
.balloon {
    width: 26px;
    height: 26px;
    vertical-align: -3px;
}
.meta {
    margin-top: 6px;
    font-size: 19px;
    font-weight: 500;
    line-height: 30px;
    color: #93867e;
}
.msg-action {
    display: flex;
    align-items: center;
    gap: 16px;
    height: 64px;
    margin: 4px 12px;
    font-size: 20px;
    font-weight: 600;
    color: #957b6d;
}
.msg-action + .msg-action {
    margin-top: 0;
}
.msg-action:last-child {
    margin-bottom: 0;
}
.msg-action .icon {
    width: 24px;
    height: 24px;
}
.avatar {
    display: flex;
    align-items: center;
    justify-content: center;
    width: 64px;
    height: 64px;
    flex: none;
    border-radius: 50%;
    font-size: 26px;
    font-weight: 700;
    color: #fff;
}
.guest {
    background-color: #c0a587;
}
.kwesi {
    background-color: #93ca42;
}
.bot {
    border: 4px solid #7c8592;
    color: #7c8592;
}
.bot .icon {
    width: 36px;
    height: 36px;
}

/* Footer */
.verbs {
    display: flex;
    align-items: center;
    gap: 24px;
    padding: 28px 32px 45px;
    border-top: 2px solid #352d29;
}
.verbs-text {
    flex: 1;
    font-size: 21px;
    line-height: 32px;
    color: #a89c94;
}
.verbs-text strong {
    font-size: 22px;
    font-weight: 600;
    color: #f5ece6;
}
.verbs-text code {
    line-height: 1;
}
.btn {
    height: 64px;
    padding: 0 32px;
    border: 2px solid #38302b;
    border-radius: 24px;
    background-color: rgba(36, 28, 26, 0.5);
    font-size: 24px;
    font-weight: 600;
    color: #a1968e;
}
.btn.primary {
    padding: 0 34px;
    border-color: #f0a34c;
    background-color: #f0a34c;
    color: #fff;
}
.composer {
    display: flex;
    align-items: center;
    height: 104px;
    margin: 0 24px 16px;
    padding: 0 16px;
    border: 2px solid #3a322c;
    border-radius: 32px;
    background-color: #2b231f;
}
.tool {
    display: flex;
    align-items: center;
    justify-content: center;
    width: 64px;
    height: 64px;
    color: #c5a490;
}
.tool .icon {
    width: 48px;
    height: 48px;
}
.tool.small .icon {
    width: 36px;
    height: 36px;
}
.composer input {
    flex: 1;
    min-width: 0;
    margin: 0 32px;
    height: 64px;
    font-size: 28px;
    outline: none;
}
.send {
    display: flex;
    align-items: center;
    justify-content: center;
    width: 64px;
    height: 64px;
    margin-left: 8px;
    border-radius: 50%;
    background: linear-gradient(135deg, #f0a34c, #cfa785);
    color: #fff;
}
.send .icon {
    width: 36px;
    height: 36px;
}
```
